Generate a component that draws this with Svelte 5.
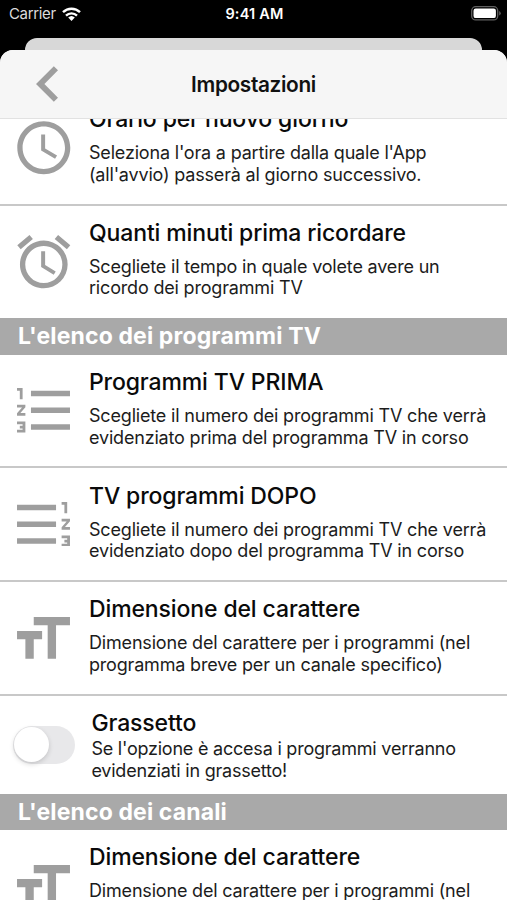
<script lang="ts">
  type Row = {
    icon: 'clock' | 'alarm' | 'before' | 'after' | 'size' | 'switch'
    title: string
    lines: string[]
  }

  const general: Row[] = [
    {
      icon: 'clock',
      title: 'Orario per nuovo giorno',
      lines: ["Seleziona l'ora a partire dalla quale l'App", "(all'avvio) passerà al giorno successivo."]
    },
    {
      icon: 'alarm',
      title: 'Quanti minuti prima ricordare',
      lines: ['Scegliete il tempo in quale volete avere un', 'ricordo dei programmi TV']
    }
  ]

  const programs: Row[] = [
    {
      icon: 'before',
      title: 'Programmi TV PRIMA',
      lines: ['Scegliete il numero dei programmi TV che verrà', 'evidenziato prima del programma TV in corso']
    },
    {
      icon: 'after',
      title: 'TV programmi DOPO',
      lines: ['Scegliete il numero dei programmi TV che verrà', 'evidenziato dopo del programma TV in corso']
    },
    {
      icon: 'size',
      title: 'Dimensione del carattere',
      lines: ['Dimensione del carattere per i programmi (nel', 'programma breve per un canale specifico)']
    },
    {
      icon: 'switch',
      title: 'Grassetto',
      lines: ["Se l'opzione è accesa i programmi verranno", 'evidenziati in grassetto!']
    }
  ]

  const channels: Row[] = [
    {
      icon: 'size',
      title: 'Dimensione del carattere',
      lines: ['Dimensione del carattere per i programmi (nel']
    }
  ]

  const sections = [
    { name: '', rows: general },
    { name: "L'elenco dei programmi TV", rows: programs },
    { name: "L'elenco dei canali", rows: channels }
  ]

  let bold = $state(false)
</script>

<div class="screen">
  <div class="status">
    <div class="carrier">
      <span>Carrier</span>
      <svg width="19" height="14" viewBox="0 0 19 14">
        <g fill="none" stroke="#fff" stroke-width="2.4">
          <path d="M1 5.2a12.2 12.2 0 0 1 17 0" />
          <path d="M4 8.6a7.9 7.9 0 0 1 11 0" />
        </g>
        <path d="M9.5 14L6.2 10.6a4.8 4.8 0 0 1 6.6 0z" fill="#fff" />
      </svg>
    </div>
    <div class="time">9:41 AM</div>
    <div class="battery">
      <svg width="30" height="15" viewBox="0 0 30 15">
        <rect x=".7" y=".7" width="26" height="13.2" rx="4" fill="none" stroke="#606060" stroke-width="1.3" />
        <rect x="2.5" y="2.5" width="22.4" height="9.6" rx="2.2" fill="#fff" />
        <path d="M28.2 5v4.6q1.5-.7 1.5-2.3t-1.5-2.3z" fill="#606060" />
      </svg>
    </div>
  </div>

  <div class="behind"></div>

  <div class="sheet">
    <header>
      <button class="back" aria-label="Indietro">
        <svg width="22" height="36" viewBox="8 6 7.41 12">
          <path d="M15.41 7.41L14 6l-6 6 6 6 1.41-1.41L10.83 12z" />
        </svg>
      </button>
      <h1>Impostazioni</h1>
    </header>

    <div class="list">
      {#each sections as section}
        {#if section.name}
          <h2>{section.name}</h2>
        {/if}
        {#each section.rows as row}
          <div class="row" class:compact={row.icon === 'switch'}>
            <div class="icon">
              {#if row.icon === 'clock'}
                <svg width="63.6" height="63.6" viewBox="0 0 24 24">
                  <path d="M11.99 2C6.47 2 2 6.48 2 12s4.47 10 9.99 10C17.52 22 22 17.52 22 12S17.52 2 11.99 2zM12 20c-4.42 0-8-3.58-8-8s3.58-8 8-8 8 3.58 8 8-3.58 8-8 8zm.5-13H11v6l5.25 3.15.75-1.23-4.5-2.67z" />
                </svg>
              {:else if row.icon === 'alarm'}
                <svg width="63.6" height="63.6" viewBox="0 0 24 24">
                  <path d="M22 5.72l-4.6-3.86-1.29 1.53 4.6 3.86L22 5.72zM7.88 3.39L6.6 1.86 2 5.71l1.29 1.53 4.59-3.85zM12.5 8H11v6l4.75 2.85.75-1.23-4-2.37V8zM12 4c-4.97 0-9 4.03-9 9s4.02 9 9 9a9 9 0 0 0 0-18zm0 16c-3.87 0-7-3.13-7-7s3.13-7 7-7 7 3.13 7 7-3.13 7-7 7z" />
                </svg>
              {:else if row.icon === 'before'}
                <svg width="53" height="44.6" viewBox="2 4 19 16">
                  <path d="M2 17h2v.5H3v1h1v.5H2v1h3v-4H2v1zm1-9h1V4H2v1h1v3zm-1 3h1.8L2 13.1v.9h3v-1H3.2L5 10.9V10H2v1z" />
                  <path d="M7 5v2h14V5H7zm0 14h14v-2H7v2zm0-6h14v-2H7v2z" />
                </svg>
              {:else if row.icon === 'after'}
                <svg width="53" height="44.6" viewBox="2 4 19 16">
                  <path d="M18 17h2v.5h-1v1h1v.5h-2v1h3v-4h-3v1zm1-9h1V4h-2v1h1v3zm-1 3h1.8L18 13.1v.9h3v-1h-1.8l1.8-2.1V10h-3v1z" />
                  <path d="M2 5v2h14V5H2zm0 14h14v-2H2v2zm0-6h14v-2H2v2z" />
                </svg>
              {:else if row.icon === 'size'}
                <svg width="53" height="41.8" viewBox="3 4 19 15">
                  <path d="M9 4v3h5v12h3V7h5V4H9zm-6 8h3v7h3v-7h3V9H3v3z" />
                </svg>
              {:else}
                <button
                  class="switch"
                  class:on={bold}
                  role="switch"
                  aria-checked={bold}
                  aria-label={row.title}
                  onclick={() => (bold = !bold)}
                >
                  <span class="knob"></span>
                </button>
              {/if}
            </div>
            <div class="text">
              <h3>{row.title}</h3>
              {#each row.lines as line}
                <p>{line}</p>
              {/each}
            </div>
          </div>
        {/each}
      {/each}
    </div>
  </div>
</div>

<style>
  :global(body) {
    background: #000;
  }

  .screen {
    display: flex;
    flex-direction: column;
    width: 507px;
    height: 900px;
    overflow: hidden;
    background: #000;
    font-family: Inter, 'Liberation Sans', sans-serif;
  }

  .status {
    display: grid;
    grid-template-columns: 1fr auto 1fr;
    align-items: center;
    height: 27px;
    margin-bottom: 11px;
    padding: 0 6px 0 9px;
    box-sizing: border-box;
    flex: none;
    color: #fff;
    font-size: 15px;
  }

  .carrier {
    display: flex;
    align-items: center;
    gap: 6px;
    color: #dcdcdc;
    letter-spacing: -0.35px;
  }

  .time {
    padding-right: 1px;
    font-weight: 600;
    font-size: 14.5px;
    letter-spacing: 0.2px;
  }

  .battery {
    display: flex;
    justify-content: flex-end;
  }

  .behind {
    flex: none;
    height: 12px;
    margin: 0 25px;
    border-radius: 12px 12px 0 0;
    background: #d8d8d8;
  }

  .sheet {
    flex: 1;
    min-height: 0;
    display: flex;
    flex-direction: column;
    overflow: hidden;
    border-radius: 13px 13px 0 0;
    background: #fff;
  }

  header {
    flex: none;
    display: grid;
    grid-template-columns: 80px 1fr 80px;
    align-items: center;
    height: 69px;
    box-sizing: border-box;
    border-bottom: 1px solid #e2e2e2;
    background: #f6f6f6;
  }

  .back {
    display: flex;
    width: 58px;
    padding: 0 0 0 36px;
    border: 0;
    background: none;
  }

  svg {
    display: block;
    flex: none;
    fill: #9e9e9e;
  }

  h1, h2, h3, p {
    margin: 0;
    white-space: nowrap;
  }

  h1 {
    text-align: center;
    font-size: 20.8px;
    font-weight: 600;
    letter-spacing: -0.35px;
    color: #111;
  }

  .list {
    flex: 1;
    min-height: 0;
    overflow: hidden;
  }

  .row {
    display: flex;
    height: 113.6px;
    box-sizing: border-box;
    border-bottom: 2px solid #c8c8c8;
  }

  /* the list is scrolled a little under the header */
  .row:first-child {
    margin-top: -27px;
  }

  .row:has(+ h2) {
    border-bottom: 0;
  }

  .icon {
    flex: none;
    display: flex;
    align-items: center;
    justify-content: center;
    width: 87.6px;
  }

  .text {
    padding: 13.2px 0 0 1.4px;
  }

  h3 {
    margin-bottom: 9px;
    font-size: 23px;
    line-height: 28px;
    font-weight: 500;
    letter-spacing: -0.12px;
    color: #0a0a0a;
  }

  p {
    font-size: 18px;
    line-height: 21.6px;
    letter-spacing: -0.18px;
    color: #1c1c1c;
  }

  h2 {
    height: 36.4px;
    padding-left: 18px;
    background: #a9a9a9;
    color: #fff;
    font-size: 23px;
    line-height: 36.4px;
    font-weight: 700;
    letter-spacing: 0.13px;
  }

  .row:has(+ h2):not(.compact) {
    height: 112.8px;
  }

  .compact {
    height: 98.2px;
  }

  .compact .text {
    padding-left: 3.8px;
  }

  .compact h3 {
    margin-bottom: 1.4px;
  }

  .compact p {
    letter-spacing: -0.22px;
  }

  .switch {
    display: flex;
    width: 62px;
    height: 38px;
    padding: 1.5px;
    box-sizing: border-box;
    border: 0;
    border-radius: 19px;
    background: #e8e8ea;
  }

  .switch.on {
    justify-content: flex-end;
    background: #34c759;
  }

  .knob {
    width: 35px;
    height: 35px;
    border-radius: 50%;
    background: #fff;
    box-shadow: 0 2px 5px rgba(0, 0, 0, 0.16);
  }
</style>
